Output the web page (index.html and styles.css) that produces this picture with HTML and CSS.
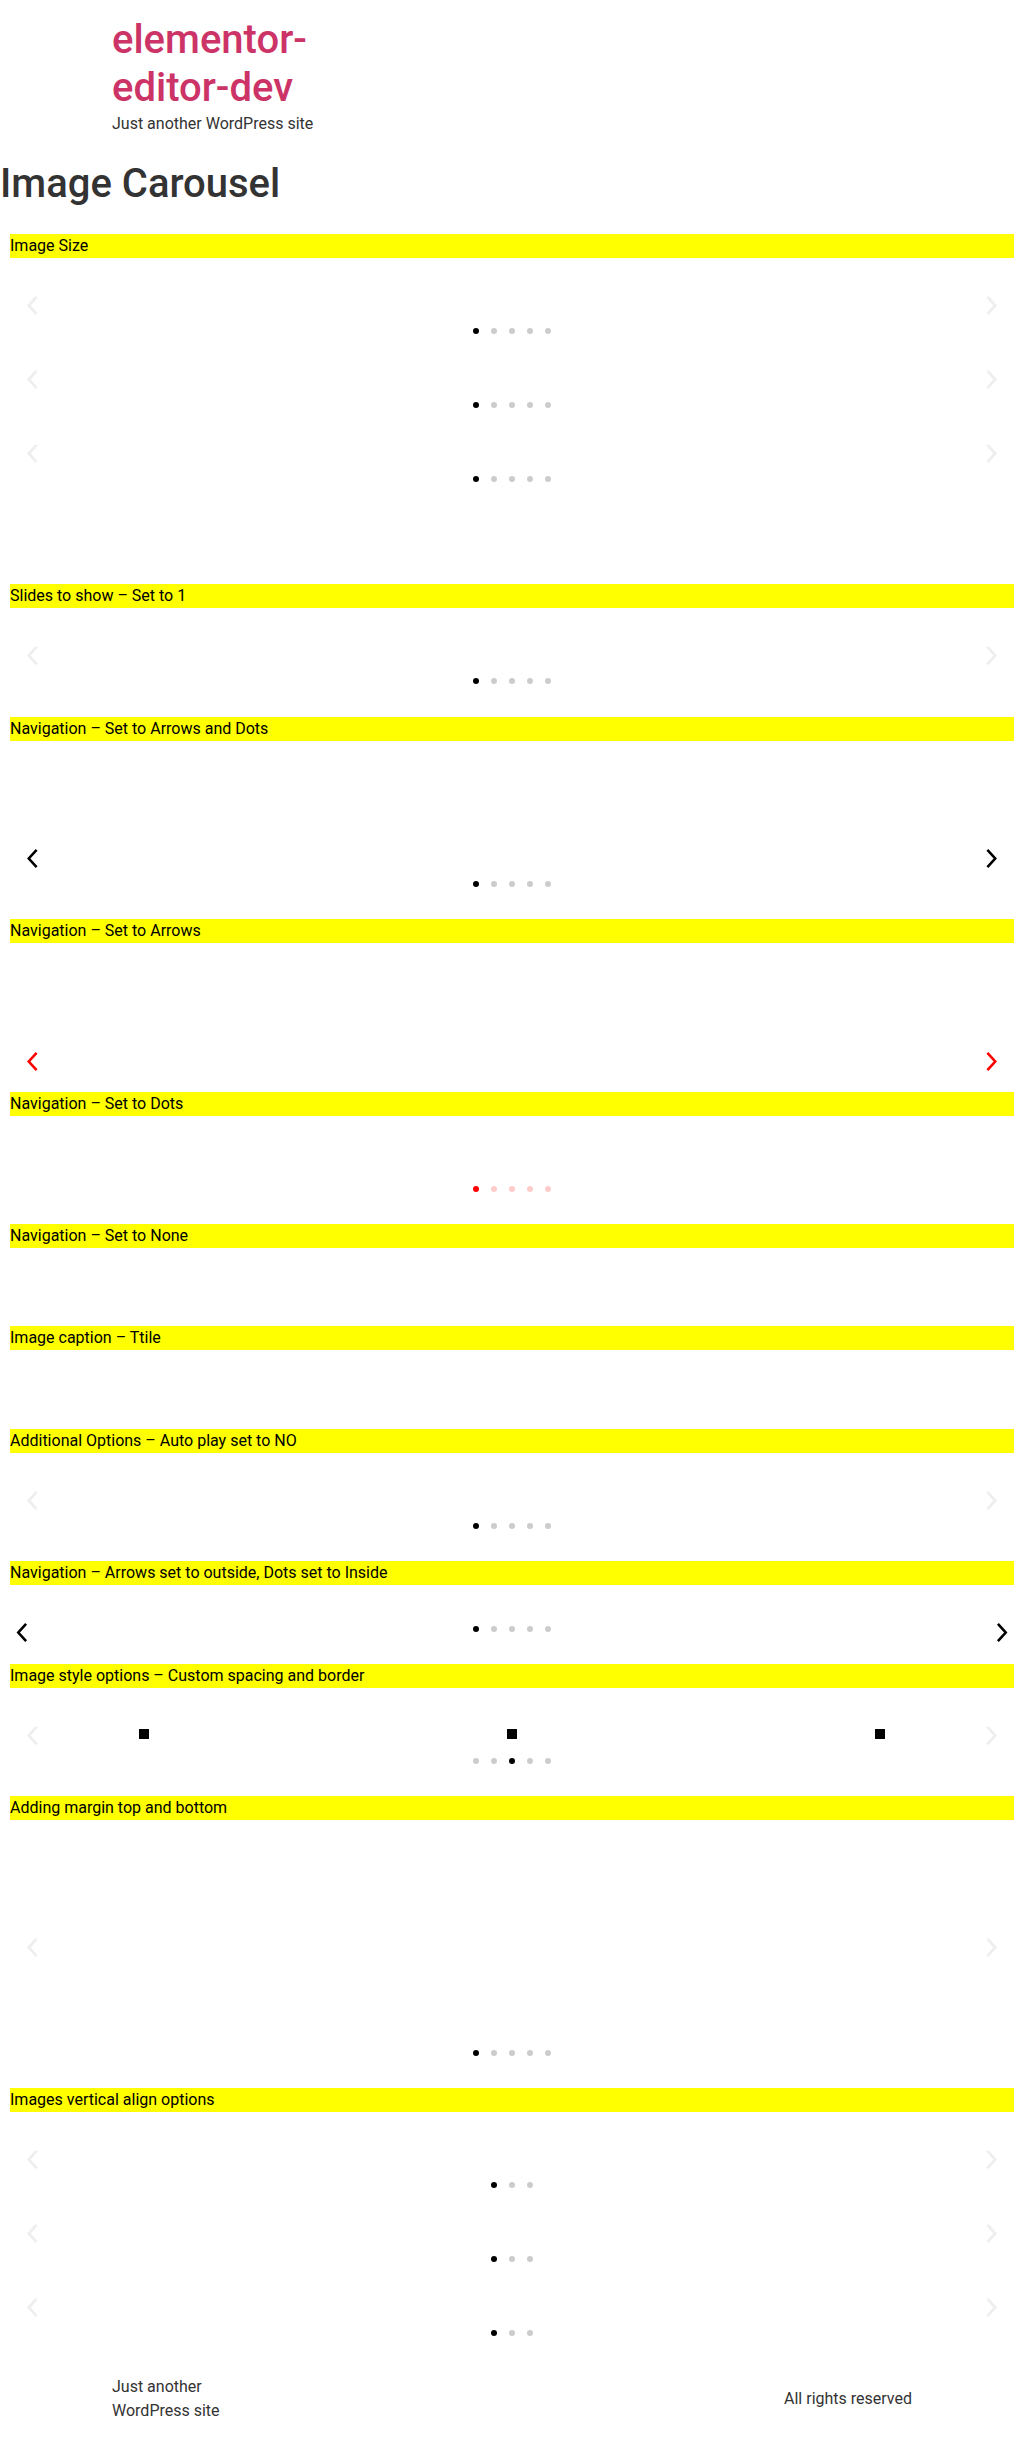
FILE: index.html
```html
<!DOCTYPE html>
<html lang="en">
<head>
<meta charset="utf-8">
<title>Image Carousel – elementor-editor-dev</title>
<link rel="stylesheet" href="styles.css">
</head>
<body>
<svg width="0" height="0" class="defs" aria-hidden="true">
  <defs>
    <polyline id="chev-left" points="9.6,0.9 1.8,9.5 9.6,18.1" />
    <polyline id="chev-right" points="1.4,0.9 9.2,9.5 1.4,18.1" />
  </defs>
</svg>

<header class="site-header">
  <div class="site-branding">
    <h1 class="site-title"><a href="#">elementor-editor-dev</a></h1>
    <p class="site-description">Just another WordPress site</p>
  </div>
</header>

<main class="site-main">
  <h1 class="page-title">Image Carousel</h1>

  <div class="content">
    <!-- Image Size -->
    <p class="bar">Image Size</p>
    <div class="carousel">
      <svg class="arrow arrow--prev" viewBox="0 0 11 19"><use href="#chev-left"/></svg>
      <svg class="arrow arrow--next" viewBox="0 0 11 19"><use href="#chev-right"/></svg>
      <div class="dots"><span class="dot is-active"></span><span class="dot"></span><span class="dot"></span><span class="dot"></span><span class="dot"></span></div>
    </div>
    <div class="carousel">
      <svg class="arrow arrow--prev" viewBox="0 0 11 19"><use href="#chev-left"/></svg>
      <svg class="arrow arrow--next" viewBox="0 0 11 19"><use href="#chev-right"/></svg>
      <div class="dots"><span class="dot is-active"></span><span class="dot"></span><span class="dot"></span><span class="dot"></span><span class="dot"></span></div>
    </div>
    <div class="carousel">
      <svg class="arrow arrow--prev" viewBox="0 0 11 19"><use href="#chev-left"/></svg>
      <svg class="arrow arrow--next" viewBox="0 0 11 19"><use href="#chev-right"/></svg>
      <div class="dots"><span class="dot is-active"></span><span class="dot"></span><span class="dot"></span><span class="dot"></span><span class="dot"></span></div>
    </div>

    <!-- Slides to show -->
    <p class="bar bar--after-group">Slides to show – Set to 1</p>
    <div class="carousel">
      <svg class="arrow arrow--prev" viewBox="0 0 11 19"><use href="#chev-left"/></svg>
      <svg class="arrow arrow--next" viewBox="0 0 11 19"><use href="#chev-right"/></svg>
      <div class="dots"><span class="dot is-active"></span><span class="dot"></span><span class="dot"></span><span class="dot"></span><span class="dot"></span></div>
    </div>

    <!-- Arrows and Dots -->
    <p class="bar bar--next-35">Navigation – Set to Arrows and Dots</p>
    <div class="carousel carousel--tall carousel--dark">
      <svg class="arrow arrow--prev" viewBox="0 0 11 19"><use href="#chev-left"/></svg>
      <svg class="arrow arrow--next" viewBox="0 0 11 19"><use href="#chev-right"/></svg>
      <div class="dots"><span class="dot is-active"></span><span class="dot"></span><span class="dot"></span><span class="dot"></span><span class="dot"></span></div>
    </div>

    <!-- Arrows only -->
    <p class="bar bar--next">Navigation – Set to Arrows</p>
    <div class="carousel carousel--arrows-only carousel--red">
      <svg class="arrow arrow--prev" viewBox="0 0 11 19"><use href="#chev-left"/></svg>
      <svg class="arrow arrow--next" viewBox="0 0 11 19"><use href="#chev-right"/></svg>
    </div>

    <!-- Dots only -->
    <p class="bar bar--tight">Navigation – Set to Dots</p>
    <div class="carousel carousel--red">
      <div class="dots"><span class="dot is-active"></span><span class="dot"></span><span class="dot"></span><span class="dot"></span><span class="dot"></span></div>
    </div>

    <!-- None -->
    <p class="bar bar--next">Navigation – Set to None</p>

    <p class="bar bar--empty-before">Image caption – Ttile</p>

    <p class="bar bar--empty-before-2">Additional Options – Auto play set to NO</p>
    <div class="carousel">
      <svg class="arrow arrow--prev" viewBox="0 0 11 19"><use href="#chev-left"/></svg>
      <svg class="arrow arrow--next" viewBox="0 0 11 19"><use href="#chev-right"/></svg>
      <div class="dots"><span class="dot is-active"></span><span class="dot"></span><span class="dot"></span><span class="dot"></span><span class="dot"></span></div>
    </div>

    <!-- Outside arrows, inside dots -->
    <p class="bar bar--next">Navigation – Arrows set to outside, Dots set to Inside</p>
    <div class="carousel carousel--outside carousel--dark">
      <svg class="arrow arrow--prev" viewBox="0 0 11 19"><use href="#chev-left"/></svg>
      <svg class="arrow arrow--next" viewBox="0 0 11 19"><use href="#chev-right"/></svg>
      <div class="dots"><span class="dot is-active"></span><span class="dot"></span><span class="dot"></span><span class="dot"></span><span class="dot"></span></div>
    </div>

    <!-- Image style -->
    <p class="bar bar--tight-5">Image style options – Custom spacing and border</p>
    <div class="carousel">
      <div class="slides">
        <span class="slide-border"></span>
        <span class="slide-border"></span>
        <span class="slide-border"></span>
      </div>
      <svg class="arrow arrow--prev" viewBox="0 0 11 19"><use href="#chev-left"/></svg>
      <svg class="arrow arrow--next" viewBox="0 0 11 19"><use href="#chev-right"/></svg>
      <div class="dots"><span class="dot"></span><span class="dot"></span><span class="dot is-active"></span><span class="dot"></span><span class="dot"></span></div>
    </div>

    <!-- Margin -->
    <p class="bar bar--next">Adding margin top and bottom</p>
    <div class="carousel carousel--margin">
      <svg class="arrow arrow--prev" viewBox="0 0 11 19"><use href="#chev-left"/></svg>
      <svg class="arrow arrow--next" viewBox="0 0 11 19"><use href="#chev-right"/></svg>
      <div class="dots"><span class="dot is-active"></span><span class="dot"></span><span class="dot"></span><span class="dot"></span><span class="dot"></span></div>
    </div>

    <!-- Vertical align -->
    <p class="bar bar--next">Images vertical align options</p>
    <div class="carousel">
      <svg class="arrow arrow--prev" viewBox="0 0 11 19"><use href="#chev-left"/></svg>
      <svg class="arrow arrow--next" viewBox="0 0 11 19"><use href="#chev-right"/></svg>
      <div class="dots"><span class="dot is-active"></span><span class="dot"></span><span class="dot"></span></div>
    </div>
    <div class="carousel">
      <svg class="arrow arrow--prev" viewBox="0 0 11 19"><use href="#chev-left"/></svg>
      <svg class="arrow arrow--next" viewBox="0 0 11 19"><use href="#chev-right"/></svg>
      <div class="dots"><span class="dot is-active"></span><span class="dot"></span><span class="dot"></span></div>
    </div>
    <div class="carousel">
      <svg class="arrow arrow--prev" viewBox="0 0 11 19"><use href="#chev-left"/></svg>
      <svg class="arrow arrow--next" viewBox="0 0 11 19"><use href="#chev-right"/></svg>
      <div class="dots"><span class="dot is-active"></span><span class="dot"></span><span class="dot"></span></div>
    </div>
  </div>
</main>

<footer class="site-footer">
  <div class="footer-branding">
    <p class="footer-description">Just another WordPress site</p>
  </div>
  <p class="copyright">All rights reserved</p>
</footer>
</body>
</html>
```

FILE: styles.css
```css
* {
  box-sizing: border-box;
}

html, body {
  margin: 0;
  padding: 0;
}

body {
  font-family: Roboto, "Liberation Sans", Arial, sans-serif;
  font-size: 16px;
  line-height: 1.5;
  color: #333;
  background: #fff;
}

.defs {
  position: absolute;
  width: 0;
  height: 0;
  overflow: hidden;
}

/* Header */
.site-header {
  max-width: 800px;
  margin: 0 auto;
  padding: 16px 0;
}

.site-branding {
  width: 210px;
}

.site-title {
  margin: 0;
  font-size: 40px;
  line-height: 1.2;
  font-weight: 500;
}

.site-title a {
  color: #c36;
  text-decoration: none;
}

.site-description {
  margin: 0;
  white-space: nowrap;
}

/* Main */
.page-title {
  margin: 8px 0 16px;
  font-size: 40px;
  line-height: 1.2;
  font-weight: 500;
  color: #333;
}

.content {
  padding: 10px 10px 25px;
}

.bar {
  margin: 0;
  background: #ff0;
  color: #000;
  line-height: 24px;
  height: 24px;
}

.bar--after-group { margin-top: 104px; }
.bar--next-35 { margin-top: 35px; }
.bar--next { margin-top: 34px; }
.bar--tight { margin-top: 4px; }
.bar--tight-5 { margin-top: 5px; }
.bar--empty-before { margin-top: 78px; }
.bar--empty-before-2 { margin-top: 79px; }

/* Carousel */
.carousel {
  position: relative;
  height: 54px;
  margin-top: 20px;
  color: #eee;
}

.carousel--tall { margin-top: 90px; }
.carousel--arrows-only { margin-top: 91px; }
.carousel--margin { height: 214px; }

.carousel--dark { color: #000; }
.carousel--red { color: #f00; }

.arrow {
  position: absolute;
  top: 50%;
  width: 11px;
  height: 19px;
  margin-top: -9.5px;
  fill: none;
  stroke: currentColor;
  stroke-width: 2.8;
  stroke-linejoin: miter;
  stroke-linecap: butt;
  overflow: visible;
}

.arrow--prev { left: 17px; }
.arrow--next { right: 17px; }

.carousel--dark .arrow,
.carousel--red .arrow { stroke-width: 2.6; }

.carousel--outside .arrow {
  width: 12px;
  height: 19px;
}
.carousel--outside .arrow--prev { left: 6px; }
.carousel--outside .arrow--next { right: 6px; }

.dots {
  position: absolute;
  left: 0;
  right: 0;
  bottom: -2px;
  display: flex;
  justify-content: center;
  gap: 12px;
}

.carousel--outside .dots {
  bottom: 27px;
}

.dot {
  width: 6px;
  height: 6px;
  border-radius: 50%;
  background: #ccc;
}

.dot.is-active {
  background: #000;
}

.carousel--red .dot {
  background: #fcc;
}

.carousel--red .dot.is-active {
  background: #f00;
}

/* Bordered slides */
.slides {
  display: grid;
  grid-template-columns: repeat(3, 1fr);
  column-gap: 100px;
  justify-items: center;
  padding-top: 21px;
}

.slide-border {
  display: block;
  width: 10px;
  height: 10px;
  background: #000;
}

/* Footer */
.site-footer {
  max-width: 800px;
  margin: 0 auto;
  padding: 16px 0;
  display: flex;
  justify-content: space-between;
  align-items: center;
}

.footer-branding {
  width: 120px;
}

.footer-description,
.copyright {
  margin: 0;
}
```
